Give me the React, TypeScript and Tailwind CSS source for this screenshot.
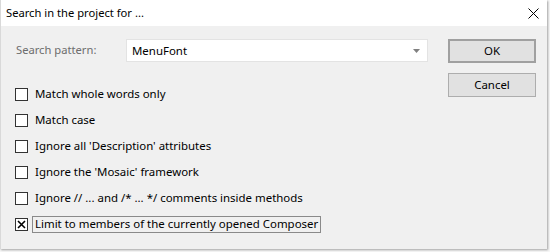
import React from "react";

const font = { fontFamily: '"Noto Sans", "Liberation Sans", sans-serif' };

function Check({ label, checked, focus }: { label: string; checked?: boolean; focus?: boolean }) {
  return (
    <div className="flex h-[26px] items-center">
      <div className="flex h-[13px] w-[13px] items-center justify-center border border-[#333333] bg-white">
        {checked && (
          <svg width="9" height="9" viewBox="0 0 9 9">
            <path d="M1 1 L8 8 M8 1 L1 8" stroke="#000" strokeWidth="1.6" />
          </svg>
        )}
      </div>
      <div
        className={
          "ml-[4px] flex h-[17px] items-center px-[2px] text-[11.45px] leading-none text-black " +
          (focus ? "border border-[#8a8a8a]" : "border border-transparent")
        }
      >
        {label}
      </div>
    </div>
  );
}

export default function App() {
  return (
    <div className="h-[252px] w-[550px] bg-[#f7f7f7]" style={font}>
      <div className="flex h-[249px] w-[547px] flex-col border-l border-[#d9d9d9] shadow-[1px_1px_2px_rgba(0,0,0,0.35)]">
        <div className="flex h-[26px] items-center justify-between bg-white pl-[5px] pr-[8px]">
          <span className="text-[11.2px] text-black">Search in the project for ...</span>
          <svg width="11" height="11" viewBox="0 0 11 11">
            <path d="M0.5 0.5 L10.5 10.5 M10.5 0.5 L0.5 10.5" stroke="#000" strokeWidth="1" />
          </svg>
        </div>
        <div className="flex flex-1 bg-[#f0f0f0] pl-[14px] pt-[13px]">
          <div className="flex w-[414px] flex-col">
            <div className="flex h-[23px] items-center">
              <span className="w-[111px] pl-[1px] text-[11.2px] text-[#6d6d6d]">Search pattern:</span>
              <div className="flex h-[23px] w-[302px] items-center justify-between border border-[#e3e3e3] bg-white pl-[5px] pr-[7px] text-[11.45px] text-black">
                <span>MenuFont</span>
                <svg width="7" height="4" viewBox="0 0 7 4">
                  <path d="M0 0 L7 0 L3.5 4 Z" fill="#808080" />
                </svg>
              </div>
            </div>
            <div className="mt-[19px] flex flex-col">
              <Check label="Match whole words only" />
              <Check label="Match case" />
              <Check label="Ignore all 'Description' attributes" />
              <Check label="Ignore the 'Mosaic' framework" />
              <Check label="Ignore // ... and /* ... */ comments inside methods" />
              <Check label="Limit to members of the currently opened Composer" checked focus />
            </div>
          </div>
          <div className="ml-[19px] flex flex-col gap-[10px]">
            <button className="flex h-[24px] w-[88px] items-center justify-center border-2 border-[#a0a0a0] bg-[#e1e1e1] text-[11.45px] text-black">
              OK
            </button>
            <button className="flex h-[24px] w-[88px] items-center justify-center border border-[#adadad] bg-[#e1e1e1] text-[11.45px] text-black">
              Cancel
            </button>
          </div>
        </div>
      </div>
    </div>
  );
}
